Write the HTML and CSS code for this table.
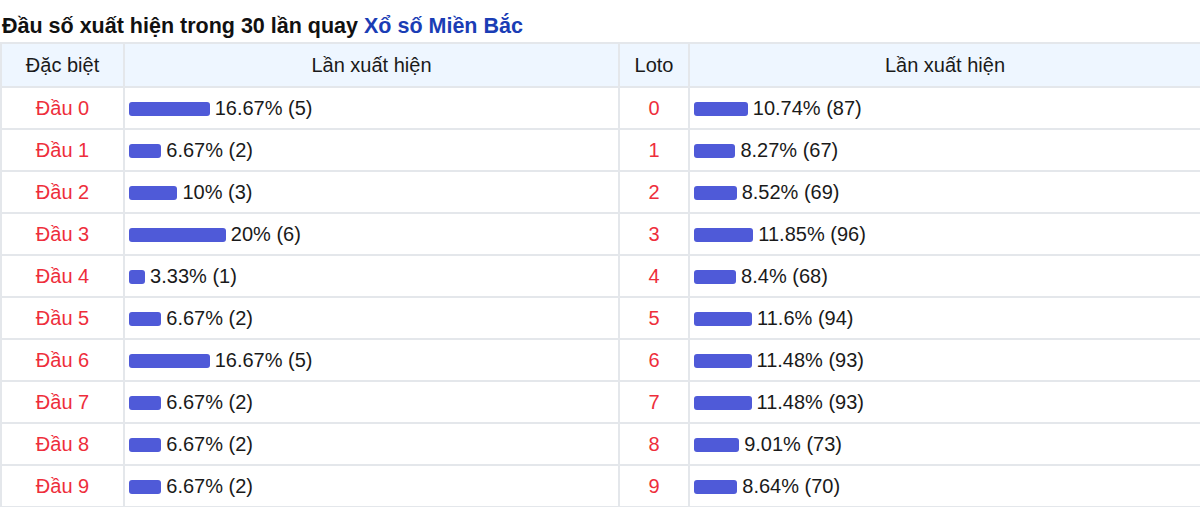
FILE: index.html
```html
<!DOCTYPE html>
<html lang="vi">
<head>
<meta charset="utf-8">
<title>Đầu số xuất hiện</title>
<link rel="stylesheet" href="styles.css">
</head>
<body>
<h2 class="title">Đầu số xuất hiện trong 30 lần quay <span class="title-link">Xổ số Miền Bắc</span></h2>
<table class="stats">
  <colgroup>
    <col class="c1"><col class="c2"><col class="c3"><col class="c4">
  </colgroup>
  <thead>
    <tr><th>Đặc biệt</th><th>Lần xuất hiện</th><th>Loto</th><th>Lần xuất hiện</th></tr>
  </thead>
  <tbody>
    <tr><td class="head">Đầu 0</td><td class="val"><span class="bar" style="width:16.67%"></span>16.67% (5)</td><td class="head">0</td><td class="val"><span class="bar" style="width:10.74%"></span>10.74% (87)</td></tr>
    <tr><td class="head">Đầu 1</td><td class="val"><span class="bar" style="width:6.67%"></span>6.67% (2)</td><td class="head">1</td><td class="val"><span class="bar" style="width:8.27%"></span>8.27% (67)</td></tr>
    <tr><td class="head">Đầu 2</td><td class="val"><span class="bar" style="width:10%"></span>10% (3)</td><td class="head">2</td><td class="val"><span class="bar" style="width:8.52%"></span>8.52% (69)</td></tr>
    <tr><td class="head">Đầu 3</td><td class="val"><span class="bar" style="width:20%"></span>20% (6)</td><td class="head">3</td><td class="val"><span class="bar" style="width:11.85%"></span>11.85% (96)</td></tr>
    <tr><td class="head">Đầu 4</td><td class="val"><span class="bar" style="width:3.33%"></span>3.33% (1)</td><td class="head">4</td><td class="val"><span class="bar" style="width:8.4%"></span>8.4% (68)</td></tr>
    <tr><td class="head">Đầu 5</td><td class="val"><span class="bar" style="width:6.67%"></span>6.67% (2)</td><td class="head">5</td><td class="val"><span class="bar" style="width:11.6%"></span>11.6% (94)</td></tr>
    <tr><td class="head">Đầu 6</td><td class="val"><span class="bar" style="width:16.67%"></span>16.67% (5)</td><td class="head">6</td><td class="val"><span class="bar" style="width:11.48%"></span>11.48% (93)</td></tr>
    <tr><td class="head">Đầu 7</td><td class="val"><span class="bar" style="width:6.67%"></span>6.67% (2)</td><td class="head">7</td><td class="val"><span class="bar" style="width:11.48%"></span>11.48% (93)</td></tr>
    <tr><td class="head">Đầu 8</td><td class="val"><span class="bar" style="width:6.67%"></span>6.67% (2)</td><td class="head">8</td><td class="val"><span class="bar" style="width:9.01%"></span>9.01% (73)</td></tr>
    <tr><td class="head">Đầu 9</td><td class="val"><span class="bar" style="width:6.67%"></span>6.67% (2)</td><td class="head">9</td><td class="val"><span class="bar" style="width:8.64%"></span>8.64% (70)</td></tr>
  </tbody>
</table>
</body>
</html>
```
FILE: styles.css
```css
html, body {
  margin: 0;
  padding: 0;
  background: #ffffff;
}
body {
  font-family: "Liberation Sans", Arial, sans-serif;
  color: #111111;
}
.title {
  margin: 0;
  padding: 14px 0 4px 2px;
  font-size: 21.5px;
  line-height: 24px;
  font-weight: bold;
  color: #111111;
  white-space: nowrap;
}
.title-link {
  color: #1a3db5;
}
.stats {
  width: 1200px;
  border-collapse: collapse;
  table-layout: fixed;
  font-size: 20px;
}
.c1 { width: 123px; }
.c2 { width: 495px; }
.c3 { width: 70px; }
.c4 { width: 512px; }
.stats th,
.stats td {
  border: 2px solid #e4e7eb;
  padding: 0 5px;
}
.stats th {
  height: 42px;
  background: #eef6ff;
  font-weight: normal;
  text-align: center;
  color: #1a1a1a;
}
.stats td {
  height: 40px;
}
.stats td.head {
  text-align: center;
  color: #ee2e3b;
}
.stats td.val {
  padding-left: 4px;
  text-align: left;
  color: #1a1a1a;
  white-space: nowrap;
}
.bar {
  display: inline-block;
  height: 14px;
  border-radius: 3px;
  background: #4f5ad8;
  vertical-align: -1px;
  margin-right: 5px;
}
```
